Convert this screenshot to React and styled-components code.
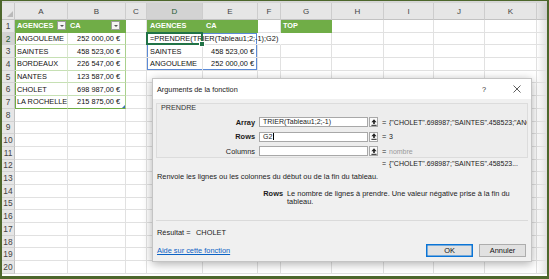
import React from 'react';
import styled, { createGlobalStyle } from 'styled-components';

const GlobalStyle = createGlobalStyle`
  html, body { margin: 0; padding: 0; background: #fff; }
  body { overflow: hidden; }
`;

const SHEET_FONT = '"Liberation Sans", Arial, sans-serif';
const UI_FONT = '"Liberation Sans", Arial, sans-serif';

const GREEN = '#70ad47';
const LIGHT_GREEN = '#c6e0b4';
const SPILL = '#5b8ad6';

const columns = [
  { id: 'A', width: 53, pad: '0 1px 0 2px' },
  { id: 'B', width: 58, right: true, pad: '0 5px 0 2px' },
  { id: 'C', width: 21, pad: '0 2px' },
  { id: 'D', width: 56, pad: '0 2px 0 3px' },
  { id: 'E', width: 55, right: true, pad: '0 3px 0 3px' },
  { id: 'F', width: 23, pad: '0 2px' },
  { id: 'G', width: 51, pad: '0 2px' },
  { id: 'H', width: 52, pad: '0 2px' },
  { id: 'I', width: 50, pad: '0 2px' },
  { id: 'J', width: 51, pad: '0 2px' },
  { id: 'K', width: 52, pad: '0 2px' },
  { id: 'L', width: 10, pad: '0', label: '' },
];

const agences = [
  ['ANGOULEME', '252 000,00 €'],
  ['SAINTES', '458 523,00 €'],
  ['BORDEAUX', '226 547,00 €'],
  ['NANTES', '123 587,00 €'],
  ['CHOLET', '698 987,00 €'],
  ['LA ROCHELLE', '215 875,00 €'],
];

// inset lines drawn inside a cell (spill range, table edges)
const edges = (color, { top, right, bottom, left }) => {
  const list = [];
  if (top) list.push(`inset 0 1px 0 ${color}`);
  if (right) list.push(`inset -1px 0 0 ${color}`);
  if (bottom) list.push(`inset 0 -1px 0 ${color}`);
  if (left) list.push(`inset 1px 0 0 ${color}`);
  return list.join(', ');
};

function buildCells() {
  const cells = {
    A1: { text: 'AGENCES', head: true, filter: true },
    B1: { text: 'CA', head: true, filter: true },
    D1: { text: 'AGENCES', head: true },
    E1: { text: 'CA', head: true },
    G1: { text: 'TOP', head: true },
    D2: { text: '=PRENDRE(TRIER(Tableau1;2;-1);G2)', active: true },
    E2: { noRight: true, shadow: edges(SPILL, { top: true, right: true }) },
    F2: { noRight: true },
    D3: { text: 'SAINTES', shadow: edges(SPILL, { left: true }) },
    E3: { text: '458 523,00 €', shadow: edges(SPILL, { right: true }) },
    D4: { text: 'ANGOULEME', shadow: edges(SPILL, { left: true, bottom: true }) },
    E4: { text: '252 000,00 €', shadow: edges(SPILL, { right: true, bottom: true }) },
  };
  agences.forEach(([name, ca], i) => {
    const row = i + 2;
    const last = row === 7;
    cells['A' + row] = {
      text: name,
      hline: last ? GREEN : LIGHT_GREEN,
      vline: '#d9e6cf',
      shadow: edges(GREEN, { left: true }),
    };
    cells['B' + row] = {
      text: ca,
      hline: last ? GREEN : LIGHT_GREEN,
      vline: '#a9d08e',
      resize: last,
    };
  });
  return cells;
}

const cells = buildCells();

const Frame = styled.div`
  position: relative;
  width: 549px;
  height: 279px;
  box-sizing: border-box;
  border-style: solid;
  border-color: #4d672c;
  border-width: 1px 2px 3px 2px;
  background: #fff;
  overflow: hidden;
  display: flex;
  flex-direction: column;
`;

const TopStrip = styled.div`
  height: 2px;
  background: #d6d6d6;
`;

const Sheet = styled.div`
  display: grid;
  grid-template-columns: 13px ${columns.map(c => c.width + 'px').join(' ')};
  grid-template-rows: 17px repeat(20, 12.7px);
  font-family: ${SHEET_FONT};
`;

const Corner = styled.div`
  position: relative;
  background: #e6e6e6;
  border-right: 1px solid #c8c8c8;
  border-bottom: 1px solid #c2c2c2;
  box-sizing: border-box;

  &::after {
    content: '';
    position: absolute;
    right: 1px;
    bottom: 2px;
    border-style: solid;
    border-width: 0 0 6px 6px;
    border-color: transparent transparent #b9b9b9 transparent;
  }
`;

const ColHead = styled.div`
  box-sizing: border-box;
  display: flex;
  align-items: center;
  justify-content: center;
  background: ${p => (p.$active ? '#d3d3d3' : p.$edge ? 'linear-gradient(to right, #e6e6e6, #cfcfcf)' : '#e6e6e6')};
  border-right: 1px solid #cdcdcd;
  border-bottom: 1px solid #c2c2c2;
  color: ${p => (p.$active ? '#1f5b35' : '#444')};
  font-family: ${UI_FONT};
  font-size: 8px;
  padding-top: 1px;
`;

const RowHead = styled.div`
  box-sizing: border-box;
  display: flex;
  align-items: center;
  justify-content: center;
  background: ${p => (p.$active ? '#d3d3d3' : '#e6e6e6')};
  border-right: 1px solid #c2c2c2;
  border-bottom: 1px solid #d2d2d2;
  color: ${p => (p.$active ? '#1f5b35' : '#444')};
  font-family: ${UI_FONT};
  font-size: 8.4px;
`;

const Cell = styled.div`
  position: relative;
  box-sizing: border-box;
  display: flex;
  align-items: center;
  justify-content: ${p => (p.$right ? 'flex-end' : 'flex-start')};
  padding: ${p => p.$pad};
  min-width: 0;
  border-right: 1px solid ${p => (p.$noRight ? 'transparent' : p.$vline || '#e1e1e1')};
  border-bottom: 1px solid ${p => p.$hline || '#e1e1e1'};
  background: ${p => (p.$head ? GREEN : p.$edge ? 'linear-gradient(to right, #ffffff, #e4e4e4)' : 'transparent')};
  box-shadow: ${p => p.$shadow || 'none'};
  color: ${p => (p.$head ? '#fff' : '#111')};
  font-weight: ${p => (p.$head ? 700 : 400)};
  font-size: 7.35px;
  white-space: nowrap;
  overflow: ${p => (p.$overflow ? 'visible' : 'hidden')};
  z-index: ${p => (p.$overflow ? 2 : 'auto')};
`;

const ActiveBox = styled.span`
  position: absolute;
  left: -1px;
  top: -1px;
  right: -1px;
  bottom: -1px;
  border: 2px solid #217346;
  pointer-events: none;

  &::after {
    content: '';
    position: absolute;
    right: -4px;
    bottom: -4px;
    width: 4px;
    height: 4px;
    background: #217346;
    border: 1px solid #fff;
  }
`;

const FilterBtn = styled.span`
  margin-left: auto;
  flex: none;
  position: relative;
  width: 9px;
  height: 9px;
  box-sizing: border-box;
  background: #f4f4f4;
  border: 1px solid #9c9c9c;

  &::after {
    content: '';
    position: absolute;
    left: 1.5px;
    top: 2.5px;
    border-style: solid;
    border-width: 2.5px 2.5px 0 2.5px;
    border-color: #555 transparent transparent transparent;
  }
`;

const ResizeMark = styled.span`
  position: absolute;
  right: 0;
  bottom: 0;
  border-style: solid;
  border-width: 0 0 3px 3px;
  border-color: transparent transparent #3f6fb8 transparent;
`;

/* ---------- dialog ---------- */

const Dialog = styled.div`
  position: absolute;
  left: 150px;
  top: 77px;
  width: 380px;
  height: 184px;
  box-sizing: border-box;
  background: #f0f0f0;
  border: 1px solid #c4c4c4;
  box-shadow: 0 2px 9px rgba(0, 0, 0, 0.32);
  display: flex;
  flex-direction: column;
  font-family: ${UI_FONT};
  font-size: 7.4px;
  color: #1b1b1b;
  z-index: 5;
`;

const TitleBar = styled.div`
  height: 20px;
  flex: none;
  display: flex;
  align-items: center;
  background: #fff;
  padding-left: 4px;
  font-size: 7.3px;
  color: #222;
`;

const TitleButtons = styled.div`
  margin-left: auto;
  display: flex;
  gap: 13px;
  margin-right: 4px;
`;

const TitleButton = styled.span`
  width: 20px;
  display: flex;
  justify-content: center;
  align-items: center;
  color: #333;
  font-size: 7.4px;
`;

const Body = styled.div`
  flex: 1;
  display: flex;
  flex-direction: column;
  padding: 4px 3px 0 3px;
`;

const Group = styled.div`
  height: 55px;
  box-sizing: border-box;
  border: 1px solid #dcdcdc;
  background: #ededed;
  display: flex;
  flex-direction: column;
  overflow: hidden;
`;

const GroupLabel = styled.div`
  height: 8px;
  line-height: 8px;
  margin-left: 4px;
  font-size: 7.2px;
  color: #333;
`;

const ArgList = styled.div`
  margin-top: 5px;
  display: flex;
  flex-direction: column;
  gap: 4.5px;
`;

const ArgRow = styled.div`
  height: 10px;
  display: flex;
  align-items: center;
`;

const ArgLabel = styled.span`
  width: 98px;
  text-align: right;
  font-weight: ${p => (p.$required ? 700 : 400)};
`;

const RefInput = styled.span`
  margin-left: 4px;
  width: 109px;
  height: 10px;
  box-sizing: border-box;
  border: 1px solid #a8a8a8;
  background: #fff;
  padding-left: 3px;
  line-height: 8px;
  font-size: 7px;
  white-space: nowrap;
  overflow: hidden;
`;

const Caret = styled.span`
  display: inline-block;
  width: 1px;
  height: 7px;
  margin-left: 0.5px;
  vertical-align: -1px;
  background: #000;
`;

const RefButton = styled.span`
  margin-left: 1px;
  width: 9px;
  height: 10px;
  box-sizing: border-box;
  border: 1px solid #a8a8a8;
  background: #fafafa;
  display: flex;
  align-items: center;
  justify-content: center;
`;

const Eq = styled.span`
  margin-left: 4px;
  width: 7px;
  flex: none;
`;

const ArgValue = styled.span`
  flex: 1;
  min-width: 0;
  white-space: nowrap;
  overflow: hidden;
  font-size: 7px;
  color: ${p => (p.$muted ? '#9a9a9a' : '#1b1b1b')};
`;

const ValueLine = styled.div`
  margin-top: 2px;
  height: 8px;
  line-height: 8px;
  display: flex;
  padding-left: 222px;
  font-size: 7px;
  white-space: nowrap;
`;

const Description = styled.div`
  margin-top: 5px;
  padding-left: 1px;
  height: 8px;
  line-height: 8px;
  white-space: nowrap;
`;

const ArgHelp = styled.div`
  margin-top: 9px;
  display: flex;
  gap: 4px;
  line-height: 8px;
  height: 16px;
`;

const ArgHelpName = styled.span`
  width: 127px;
  flex: none;
  text-align: right;
  font-weight: 700;
`;

const ArgHelpText = styled.span`
  width: 228px;
`;

const Separator = styled.div`
  margin-top: 14px;
  height: 1px;
  background: #dadada;
`;

const ResultLine = styled.div`
  margin-top: 8px;
  height: 8px;
  line-height: 8px;
  display: flex;
  padding-left: 1px;
`;

const ResultLabel = styled.span`
  width: 39px;
`;

const Footer = styled.div`
  margin-top: 7px;
  height: 13px;
  display: flex;
  align-items: center;
  padding: 0 2px 0 1px;
`;

const HelpLink = styled.span`
  color: #0b62c4;
  text-decoration: underline;
`;

const Buttons = styled.div`
  margin-left: auto;
  display: flex;
  gap: 6px;
`;

const Button = styled.span`
  width: 47px;
  height: 13px;
  box-sizing: border-box;
  display: flex;
  align-items: center;
  justify-content: center;
  background: #e1e1e1;
  border: 1px solid ${p => (p.$primary ? '#0a74d6' : '#adadad')};
  box-shadow: ${p => (p.$primary ? 'inset 0 0 0 0.5px #0a74d6' : 'none')};
  color: #111;
`;

const RefIcon = () => (
  <svg width="6" height="7" viewBox="0 0 6 7">
    <path d="M3 0.3 L5.6 3.2 H3.8 V5 H2.2 V3.2 H0.4 Z" fill="#222" />
    <rect x="0.4" y="5.8" width="5.2" height="1" fill="#222" />
  </svg>
);

const CloseIcon = () => (
  <svg width="8" height="8" viewBox="0 0 8 8">
    <path d="M0.5 0.5 L7.5 7.5 M7.5 0.5 L0.5 7.5" stroke="#333" strokeWidth="0.8" />
  </svg>
);

const args = [
  { name: 'Array', required: true, input: 'TRIER(Tableau1;2;-1)', value: '{"CHOLET".698987;"SAINTES".458523;"ANGOULEME".252000}' },
  { name: 'Rows', required: true, input: 'G2', caret: true, value: '3' },
  { name: 'Columns', required: false, input: '', value: 'nombre', muted: true },
];

function FunctionDialog() {
  return (
    <Dialog>
      <TitleBar>
        Arguments de la fonction
        <TitleButtons>
          <TitleButton>?</TitleButton>
          <TitleButton><CloseIcon /></TitleButton>
        </TitleButtons>
      </TitleBar>
      <Body>
        <Group>
          <GroupLabel>PRENDRE</GroupLabel>
          <ArgList>
            {args.map(a => (
              <ArgRow key={a.name}>
                <ArgLabel $required={a.required}>{a.name}</ArgLabel>
                <RefInput>
                  {a.input}
                  {a.caret && <Caret />}
                </RefInput>
                <RefButton><RefIcon /></RefButton>
                <Eq>=</Eq>
                <ArgValue $muted={a.muted}>{a.value}</ArgValue>
              </ArgRow>
            ))}
          </ArgList>
        </Group>
        <ValueLine>
          <Eq>=</Eq>
          <span>{'{"CHOLET".698987;"SAINTES".458523...'}</span>
        </ValueLine>
        <Description>
          Renvoie les lignes ou les colonnes du début ou de la fin du tableau.
        </Description>
        <ArgHelp>
          <ArgHelpName>Rows</ArgHelpName>
          <ArgHelpText>
            Le nombre de lignes à prendre. Une valeur négative prise à la fin du tableau.
          </ArgHelpText>
        </ArgHelp>
        <Separator />
        <ResultLine>
          <ResultLabel>Résultat =</ResultLabel>
          <span>CHOLET</span>
        </ResultLine>
        <Footer>
          <HelpLink>Aide sur cette fonction</HelpLink>
          <Buttons>
            <Button $primary>OK</Button>
            <Button>Annuler</Button>
          </Buttons>
        </Footer>
      </Body>
    </Dialog>
  );
}

export default function App() {
  const rows = Array.from({ length: 20 }, (_, i) => i + 1);

  return (
    <>
      <GlobalStyle />
      <Frame>
        <TopStrip />
        <Sheet>
          <Corner />
          {columns.map(c => (
            <ColHead key={c.id} $active={c.id === 'D'} $edge={c.id === 'L'}>
              {c.label !== undefined ? c.label : c.id}
            </ColHead>
          ))}
          {rows.map(r => (
            <React.Fragment key={r}>
              <RowHead $active={r === 2}>{r}</RowHead>
              {columns.map(c => {
                const cell = cells[c.id + r] || {};
                return (
                  <Cell
                    key={c.id}
                    $pad={c.pad}
                    $right={c.right && !cell.head}
                    $head={cell.head}
                    $vline={cell.vline || (cell.head ? GREEN : undefined)}
                    $hline={cell.hline || (cell.head ? GREEN : undefined)}
                    $noRight={cell.noRight}
                    $shadow={cell.shadow}
                    $overflow={cell.active}
                    $edge={c.id === 'L'}
                  >
                    {cell.text}
                    {cell.filter && <FilterBtn />}
                    {cell.active && <ActiveBox />}
                    {cell.resize && <ResizeMark />}
                  </Cell>
                );
              })}
            </React.Fragment>
          ))}
        </Sheet>
        <FunctionDialog />
      </Frame>
    </>
  );
}
